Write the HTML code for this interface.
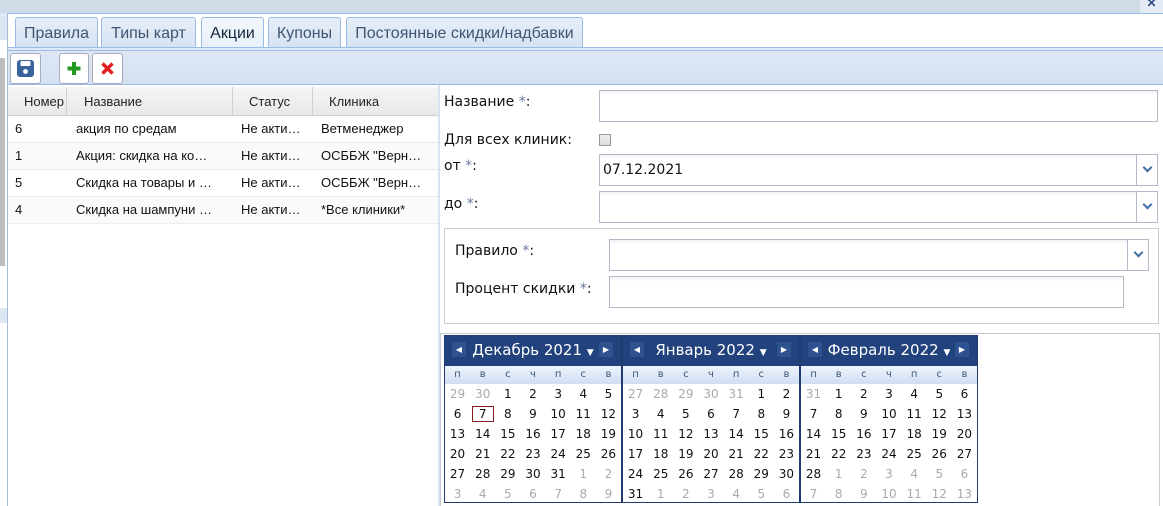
<!DOCTYPE html>
<html><head><meta charset="utf-8"><style>
*{box-sizing:border-box;margin:0;padding:0}
body{width:1163px;height:506px;overflow:hidden;background:#fff;font-family:"Liberation Sans",sans-serif;position:relative}
.a{position:absolute}
.tab{position:absolute;top:17px;height:30px;border:1px solid #99bbe8;border-bottom:none;border-radius:3px 3px 0 0;background:linear-gradient(#e6eef8,#d7e3f2);color:#3f5573;font-size:16px;line-height:31px;text-align:center}
.btn{position:absolute;top:53px;height:31px;border:1px solid #aab;border-radius:3px;background:#fff}
.gh{position:absolute;top:87px;height:29px;font-size:13px;line-height:29px;color:#222;border-right:1px solid #d0d0d0}
.row{position:absolute;left:8px;width:430px;height:27px;border-bottom:1px solid #ececec;font-size:13px;line-height:26px;color:#111}
.row span{position:absolute}
.lbl{position:absolute;font-family:"DejaVu Sans",sans-serif;font-size:14px;color:#111}
.lbl i{font-style:normal;color:#6a7aa0}
.inp{position:absolute;border:1px solid #b5b8c8;background:linear-gradient(#eef0f3 0,#fff 4px)}
.trg{position:absolute;right:0;top:0;bottom:0;width:21px;border-left:1px solid #b5b8c8;background:#fff}
.trg:after{content:"";position:absolute;left:7px;top:9px;width:5px;height:5px;border-right:2px solid #3f6ea5;border-bottom:2px solid #3f6ea5;transform:rotate(45deg)}
.cal{position:absolute;top:335px;width:178px;height:168px;border:1px solid #1f3b72;font-family:"DejaVu Sans",sans-serif}
.ch{height:30px;background:#22427d;color:#fff;font-size:15px;line-height:29px;text-align:center;position:relative}
.ch .ar{position:absolute;top:6px;width:14px;height:15px;background:#2e5290;color:#fff;font-size:8px;line-height:15px;text-align:center}
.dw{height:18px;background:linear-gradient(#eef4fc,#cfdef3);display:flex;font-size:10px;color:#3f5573;line-height:18px}
.dw span,.dr span{flex:1;text-align:center}
.dr{display:flex;height:20px;font-size:12px;line-height:20px;color:#111}
.dr .g{color:#aaa}
</style></head><body>
<div class="a" style="left:0;top:0;width:1163px;height:13px;background:#d0dbe8"></div>
<div class="a" style="left:1140px;top:0;width:23px;height:13px;background:#e4ebf4;color:#2d4f86;font-size:12px;line-height:7px;text-align:center;font-weight:bold">✕</div>
<div class="a" style="left:0;top:13px;width:8px;height:493px;background:#fff;border-right:1px solid #a8bad4"></div>
<div class="a" style="left:0;top:13px;width:7px;height:27px;background:#dde7f3"></div>
<div class="a" style="left:0;top:58px;width:5px;height:208px;background:#bdbdbd"></div>
<div class="a" style="left:0;top:308px;width:7px;height:15px;background:#dde7f3"></div>
<!-- tabs -->
<div class="a" style="left:8px;top:13px;width:1155px;height:34px;background:#fff;border-top:1px solid #99bbe8"></div>
<div class="tab" style="left:15px;width:83px">Правила</div>
<div class="tab" style="left:101px;width:95px">Типы карт</div>
<div class="tab" style="left:201px;width:63px;background:linear-gradient(#f3f7fc,#e8f0fa);color:#15283f">Акции</div>
<div class="tab" style="left:268px;width:73px">Купоны</div>
<div class="tab" style="left:346px;width:237px">Постоянные скидки/надбавки</div>
<!-- toolbar -->
<div class="a" style="left:8px;top:47px;width:1155px;height:38px;background:linear-gradient(#dfe8f5,#d3e1f1);border-top:1px solid #99bbe8;border-bottom:1px solid #99bbe8"></div>
<div class="a" style="left:8px;top:50px;width:1155px;height:1px;background:#99bbe8"></div>
<div class="btn" style="left:10px;width:31px"><svg width="29" height="29" viewBox="0 0 29 29"><rect x="6" y="6" width="17" height="17" rx="3" fill="#3a639d"/><rect x="9.5" y="7" width="10" height="5" rx="1" fill="#fff"/><circle cx="14.5" cy="17.5" r="2.4" fill="#fff"/></svg></div>
<div class="btn" style="left:59px;width:30px"><svg width="28" height="29" viewBox="0 0 28 29"><path d="M14 8v13M7.5 14.5h13" stroke="#1f9a1f" stroke-width="4"/></svg></div>
<div class="btn" style="left:92px;width:31px"><svg width="29" height="29" viewBox="0 0 29 29"><path d="M9.5 9.5l10 10M19.5 9.5l-10 10" stroke="#e02020" stroke-width="3.5"/></svg></div>
<!-- grid -->
<div class="a" style="left:8px;top:87px;width:430px;height:29px;background:linear-gradient(#f6f6f6,#e8e8e8);border-bottom:1px solid #d0d0d0"></div>
<div class="gh" style="left:8px;width:59px;padding-left:16px">Номер</div>
<div class="gh" style="left:67px;width:166px;padding-left:17px">Название</div>
<div class="gh" style="left:233px;width:80px;padding-left:16px">Статус</div>
<div class="gh" style="left:313px;width:125px;padding-left:16px;border-right:none">Клиника</div>
<div class="row" style="top:116px"><span style="left:7px">6</span><span style="left:68px">акция по средам</span><span style="left:233px">Не акти…</span><span style="left:313px">Ветменеджер</span></div>
<div class="row" style="top:143px;background:#fafafa"><span style="left:7px">1</span><span style="left:68px">Акция: скидка на ко…</span><span style="left:233px">Не акти…</span><span style="left:313px">ОСББЖ "Верн…</span></div>
<div class="row" style="top:170px"><span style="left:7px">5</span><span style="left:68px">Скидка на товары и …</span><span style="left:233px">Не акти…</span><span style="left:313px">ОСББЖ "Верн…</span></div>
<div class="row" style="top:197px;background:#fafafa"><span style="left:7px">4</span><span style="left:68px">Скидка на шампуни …</span><span style="left:233px">Не акти…</span><span style="left:313px">*Все клиники*</span></div>
<div class="a" style="left:438px;top:85px;width:2px;height:421px;background:#d9e3ef"></div>
<!-- form -->
<div class="lbl" style="left:444px;top:94px">Название <i>*</i>:</div>
<div class="inp" style="left:599px;top:90px;width:559px;height:32px"></div>
<div class="lbl" style="left:444px;top:132px">Для всех клиник:</div>
<div class="a" style="left:599px;top:134px;width:12px;height:12px;border:1px solid #999;background:linear-gradient(#eee,#ddd)"></div>
<div class="lbl" style="left:444px;top:158px">от <i>*</i>:</div>
<div class="inp" style="left:599px;top:154px;width:559px;height:32px"><span style="position:absolute;left:3px;top:7px;font-family:'DejaVu Sans',sans-serif;font-size:14px;color:#111">07.12.2021</span><div class="trg"></div></div>
<div class="lbl" style="left:444px;top:196px">до <i>*</i>:</div>
<div class="inp" style="left:599px;top:191px;width:559px;height:32px"><div class="trg"></div></div>
<div class="a" style="left:444px;top:228px;width:715px;height:96px;border:1px solid #c6cbd6"></div>
<div class="lbl" style="left:455px;top:243px">Правило <i>*</i>:</div>
<div class="inp" style="left:609px;top:239px;width:540px;height:32px"><div class="trg"></div></div>
<div class="lbl" style="left:455px;top:281px">Процент скидки <i>*</i>:</div>
<div class="inp" style="left:609px;top:276px;width:515px;height:32px"></div>
<div class="a" style="left:440px;top:333px;width:720px;height:173px;border:1px solid #c6cbd6;border-bottom:none"></div>
<!-- calendars -->
<div class="cal" style="left:444px">
<div class="ch"><span class="ar" style="left:7px">◀</span>Декабрь 2021 <span style="font-size:9px">▼</span><span class="ar" style="right:8px">▶</span></div>
<div class="dw"><span>п</span><span>в</span><span>с</span><span>ч</span><span>п</span><span>с</span><span>в</span></div>
<div class="dr"><span class="g">29</span><span class="g">30</span><span>1</span><span>2</span><span>3</span><span>4</span><span>5</span></div>
<div class="dr"><span>6</span><span><b style="font-weight:normal;display:inline-block;width:22px;height:16px;line-height:14px;border:1px solid #8b1a1a;margin-top:2px">7</b></span><span>8</span><span>9</span><span>10</span><span>11</span><span>12</span></div>
<div class="dr"><span>13</span><span>14</span><span>15</span><span>16</span><span>17</span><span>18</span><span>19</span></div>
<div class="dr"><span>20</span><span>21</span><span>22</span><span>23</span><span>24</span><span>25</span><span>26</span></div>
<div class="dr"><span>27</span><span>28</span><span>29</span><span>30</span><span>31</span><span class="g">1</span><span class="g">2</span></div>
<div class="dr"><span class="g">3</span><span class="g">4</span><span class="g">5</span><span class="g">6</span><span class="g">7</span><span class="g">8</span><span class="g">9</span></div>
</div>
<div class="cal" style="left:622px">
<div class="ch"><span class="ar" style="left:7px">◀</span>Январь 2022 <span style="font-size:9px">▼</span><span class="ar" style="right:8px">▶</span></div>
<div class="dw"><span>п</span><span>в</span><span>с</span><span>ч</span><span>п</span><span>с</span><span>в</span></div>
<div class="dr"><span class="g">27</span><span class="g">28</span><span class="g">29</span><span class="g">30</span><span class="g">31</span><span>1</span><span>2</span></div>
<div class="dr"><span>3</span><span>4</span><span>5</span><span>6</span><span>7</span><span>8</span><span>9</span></div>
<div class="dr"><span>10</span><span>11</span><span>12</span><span>13</span><span>14</span><span>15</span><span>16</span></div>
<div class="dr"><span>17</span><span>18</span><span>19</span><span>20</span><span>21</span><span>22</span><span>23</span></div>
<div class="dr"><span>24</span><span>25</span><span>26</span><span>27</span><span>28</span><span>29</span><span>30</span></div>
<div class="dr"><span>31</span><span class="g">1</span><span class="g">2</span><span class="g">3</span><span class="g">4</span><span class="g">5</span><span class="g">6</span></div>
</div>
<div class="cal" style="left:800px">
<div class="ch"><span class="ar" style="left:7px">◀</span>Февраль 2022 <span style="font-size:9px">▼</span><span class="ar" style="right:8px">▶</span></div>
<div class="dw"><span>п</span><span>в</span><span>с</span><span>ч</span><span>п</span><span>с</span><span>в</span></div>
<div class="dr"><span class="g">31</span><span>1</span><span>2</span><span>3</span><span>4</span><span>5</span><span>6</span></div>
<div class="dr"><span>7</span><span>8</span><span>9</span><span>10</span><span>11</span><span>12</span><span>13</span></div>
<div class="dr"><span>14</span><span>15</span><span>16</span><span>17</span><span>18</span><span>19</span><span>20</span></div>
<div class="dr"><span>21</span><span>22</span><span>23</span><span>24</span><span>25</span><span>26</span><span>27</span></div>
<div class="dr"><span>28</span><span class="g">1</span><span class="g">2</span><span class="g">3</span><span class="g">4</span><span class="g">5</span><span class="g">6</span></div>
<div class="dr"><span class="g">7</span><span class="g">8</span><span class="g">9</span><span class="g">10</span><span class="g">11</span><span class="g">12</span><span class="g">13</span></div>
</div>
</body></html>
